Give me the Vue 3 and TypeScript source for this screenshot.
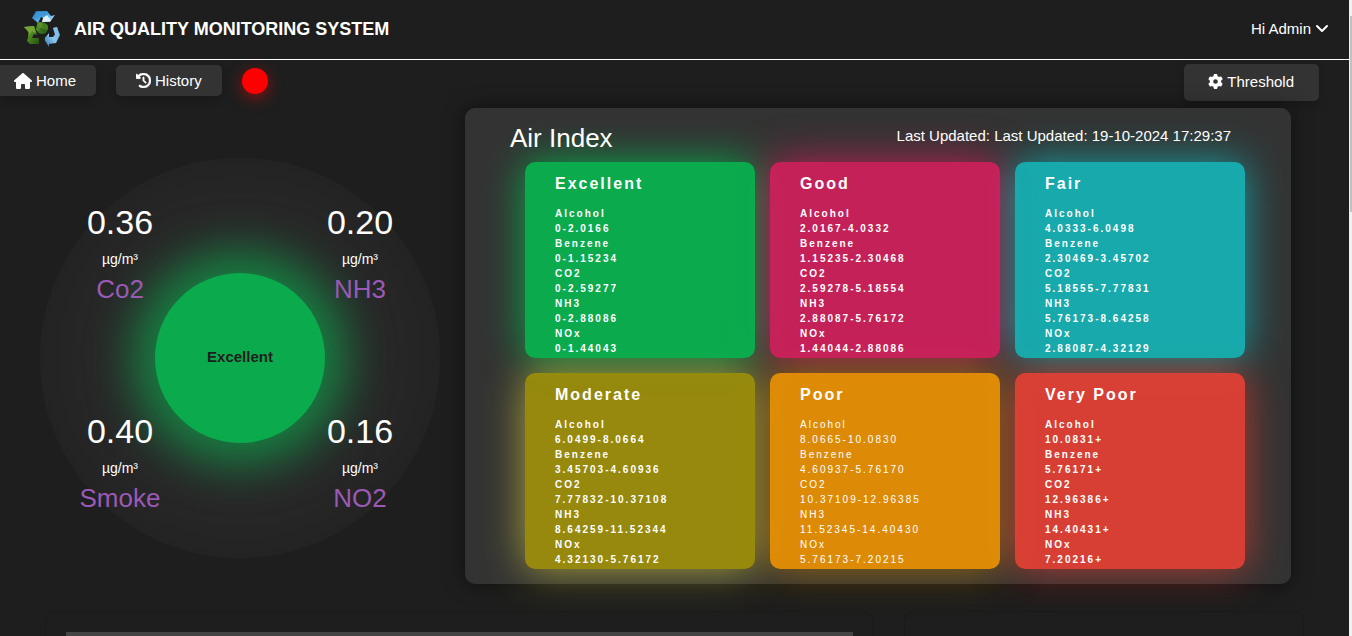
<script setup lang="ts">
interface Reading { id: string; value: string; label: string }
interface Level { name: string; tone: string; ranges: string[] }

const readings: Reading[] = [
  { id: 'co2', value: '0.36', label: 'Co2' },
  { id: 'nh3', value: '0.20', label: 'NH3' },
  { id: 'smoke', value: '0.40', label: 'Smoke' },
  { id: 'no2', value: '0.16', label: 'NO2' },
]

const gases = ['Alcohol', 'Benzene', 'CO2', 'NH3', 'NOx']

const levels: Level[] = [
  { name: 'Excellent', tone: 'excellent', ranges: ['0-2.0166', '0-1.15234', '0-2.59277', '0-2.88086', '0-1.44043'] },
  { name: 'Good', tone: 'good', ranges: ['2.0167-4.0332', '1.15235-2.30468', '2.59278-5.18554', '2.88087-5.76172', '1.44044-2.88086'] },
  { name: 'Fair', tone: 'fair', ranges: ['4.0333-6.0498', '2.30469-3.45702', '5.18555-7.77831', '5.76173-8.64258', '2.88087-4.32129'] },
  { name: 'Moderate', tone: 'moderate', ranges: ['6.0499-8.0664', '3.45703-4.60936', '7.77832-10.37108', '8.64259-11.52344', '4.32130-5.76172'] },
  { name: 'Poor', tone: 'poor', ranges: ['8.0665-10.0830', '4.60937-5.76170', '10.37109-12.96385', '11.52345-14.40430', '5.76173-7.20215'] },
  { name: 'Very Poor', tone: 'very-poor', ranges: ['10.0831+', '5.76171+', '12.96386+', '14.40431+', '7.20216+'] },
]
</script>

<template>
  <div class="page">
    <div class="content">
      <header class="topbar">
        <div class="brand">
          <svg class="logo" viewBox="0 0 38 38" aria-hidden="true">
            <defs>
              <linearGradient id="blueTop" x1="0" y1="0" x2="1" y2="1">
                <stop offset="0" stop-color="#1b6fb5" /><stop offset="0.5" stop-color="#4fa9e4" /><stop offset="1" stop-color="#d8effb" />
              </linearGradient>
              <linearGradient id="blueSide" x1="1" y1="0" x2="0" y2="1">
                <stop offset="0" stop-color="#4d9ddb" /><stop offset="0.5" stop-color="#8cc6ec" /><stop offset="1" stop-color="#266da8" />
              </linearGradient>
              <linearGradient id="leaf" x1="0" y1="0" x2="1" y2="1">
                <stop offset="0" stop-color="#79a938" /><stop offset="0.5" stop-color="#4d8620" /><stop offset="1" stop-color="#245010" />
              </linearGradient>
            </defs>
            <path d="M9 8 13 1H24L28 6 32 5 27 12H19L22 9 18 7 15 13Z" fill="url(#blueTop)" />
            <path d="M14 2H23L25 5 20 6 16 5 12 7Z" fill="#3d97da" />
            <path d="m20 8 4-3 4 6-9 1Z" fill="#e2f1f8" />
            <path d="m30 18 4-1 3 8-4 8-7 1v3l-5-8 5-6v4h4l3-4Z" fill="url(#blueSide)" />
            <path d="m30 18 4-1 2 8-3 3Z" fill="#85bfe8" />
            <path d="m1 17 10-1 3 9-3-1-2 4h7v6H7L4 31 6 24 4 20Z" fill="url(#leaf)" />
            <path d="m1 17 10-1 2 7-4-2-4 6 1-5Z" fill="#75a635" />
            <path d="m18 29 1-9h2l1 10Z" fill="#17280d" />
            <circle cx="19" cy="18" r="6" fill="#36701c" />
            <circle cx="17" cy="15" r="3" fill="#579128" />
            <circle cx="22" cy="17" r="3" fill="#437f20" />
            <circle cx="15" cy="19" r="2" fill="#4d8924" />
            <circle cx="21" cy="21" r="2" fill="#2f6518" />
          </svg>
          <h1>AIR QUALITY MONITORING SYSTEM</h1>
        </div>
        <button class="account" type="button">
          Hi Admin
          <svg class="chevron" viewBox="0 0 14 16" aria-hidden="true"><path d="m2 5 5 5 5-5" /></svg>
        </button>
      </header>

      <nav class="toolbar">
        <div class="links">
          <a class="pill home" href="#home">
            <svg class="icon wide" viewBox="0 0 576 512" aria-hidden="true"><path d="M575.8 255.5c0 18-15 32.1-32 32.1h-32l.7 160.2c0 2.700-.2 5.400-.5 8.100V472c0 22.100-17.900 40-40 40h-80c-22.100 0-40-17.900-40-40v-88c0-17.700-14.300-32-32-32h-64c-17.700 0-32 14.300-32 32v88c0 22.100-17.900 40-40 40h-80c-22.100 0-40-17.900-40-40V287.600H32c-18 0-32-14-32-32.100 0-9 3-17 10-24L266.400 8c7-7 15-8 22-8s15 2 21 7l255.400 224.500c8 7 12 15 11 24Z" /></svg>
            Home
          </a>
          <a class="pill" href="#history">
            <svg class="icon" viewBox="0 0 512 512" aria-hidden="true"><path d="M75 75 41 41C26 26 0 36.700 0 58.100V168c0 13.300 10.700 24 24 24h110.100c21.400 0 32.100-25.900 17-41l-30.800-30.800C155 85.500 203 64 256 64c106 0 192 86 192 192s-86 192-192 192c-40.800 0-78.600-12.700-109.700-34.400-14.500-10.100-34.400-6.600-44.600 7.900s-6.600 34.400 7.900 44.600C151.200 495 201.700 512 256 512c141.400 0 256-114.600 256-256S397.400 0 256 0C185.300 0 121.300 28.700 75 75Zm181 53c-13.300 0-24 10.700-24 24v104c0 6.400 2.500 12.500 7 17l72 72c9.400 9.400 24.600 9.400 33.900 0s9.400-24.600 0-33.900l-65-65V152c0-13.300-10.700-24-24-24Z" stroke="#fff" stroke-width="16" /></svg>
            History
          </a>
          <span class="status" role="status" aria-label="Offline"></span>
        </div>
        <button class="pill threshold" type="button">
          <svg class="icon" viewBox="0 0 512 512" aria-hidden="true"><path d="M495.900 166.600c3.200 8.700.5 18.400-6.400 24.600l-43.300 39.400c1.100 8.300 1.700 16.800 1.700 25.400s-.6 17.100-1.700 25.400l43.300 39.400c6.900 6.200 9.600 15.900 6.400 24.600-4.400 11.900-9.700 23.300-15.800 34.300l-4.700 8.100c-6.600 11-14 21.400-22.100 31.200-5.900 7.200-15.700 9.600-24.500 6.800l-55.700-17.700c-13.400 10.300-28.200 18.900-44 25.400l-12.500 57.100c-2 9.100-9 16.300-18.200 17.800-13.800 2.300-28 3.500-42.500 3.500s-28.700-1.200-42.500-3.500c-9.200-1.500-16.200-8.700-18.200-17.800l-12.500-57.100c-15.800-6.500-30.600-15.100-44-25.400L83.100 425.900c-8.800 2.800-18.600.3-24.500-6.800-8.100-9.800-15.500-20.200-22.100-31.200l-4.700-8.100c-6.100-11-11.400-22.400-15.800-34.300-3.200-8.700-.5-18.400 6.400-24.600l43.300-39.400C64.600 273.100 64 264.600 64 256s.6-17.100 1.700-25.400l-43.300-39.400c-6.900-6.200-9.600-15.900-6.400-24.600 4.400-11.900 9.700-23.300 15.800-34.300l4.700-8.100c6.600-11 14-21.400 22.100-31.200 5.900-7.200 15.700-9.600 24.500-6.800l55.700 17.700c13.400-10.300 28.200-18.900 44-25.400l12.500-57.100c2-9.100 9-16.300 18.200-17.800C227.300 1.200 241.500 0 256 0s28.700 1.200 42.500 3.500c9.200 1.500 16.200 8.700 18.200 17.800l12.500 57.100c15.800 6.500 30.600 15.100 44 25.400l55.700-17.700c8.800-2.800 18.600-.3 24.500 6.800 8.100 9.800 15.500 20.200 22.100 31.200l4.700 8.100c6.100 11 11.400 22.400 15.800 34.300ZM256 336a80 80 0 1 0 0-160 80 80 0 0 0 0 160Z" /></svg>
          Threshold
        </button>
      </nav>

      <main class="dashboard">
        <section class="gauge" aria-label="Current readings">
          <div class="level">Excellent</div>
          <div v-for="r in readings" :key="r.id" class="reading">
            <span class="value">{{ r.value }}</span>
            <span class="unit">µg/m³</span>
            <span class="gas">{{ r.label }}</span>
          </div>
        </section>

        <section class="index">
          <div class="index-head">
            <h2>Air Index</h2>
            <p>Last Updated: Last Updated: 19-10-2024 17:29:37</p>
          </div>
          <div class="cards">
            <article v-for="l in levels" :key="l.name" class="card" :class="l.tone">
              <h3>{{ l.name }}</h3>
              <dl>
                <template v-for="(g, i) in gases" :key="g">
                  <dt>{{ g }}</dt>
                  <dd>{{ l.ranges[i] }}</dd>
                </template>
              </dl>
            </article>
          </div>
        </section>
      </main>

      <div class="charts">
        <section class="chart"><div class="plot"></div></section>
        <section class="chart"></section>
      </div>
    </div>
    <div class="scroll-track" aria-hidden="true"><div class="scroll-thumb"></div></div>
  </div>
</template>

<style>
body {
  margin: 0;
  background: #1e1e1e;
}
</style>

<style scoped>
* {
  box-sizing: border-box;
}

.page {
  display: flex;
  height: 100vh;
  overflow: hidden;
  background: #1e1e1e;
  color: #fff;
  font-family: "Liberation Sans", Arial, sans-serif;
  font-size: 15px;
}

.content {
  flex: 1;
  min-width: 0;
}

h1, h2, h3, p, dl, dd {
  margin: 0;
}

.topbar {
  display: flex;
  align-items: center;
  justify-content: space-between;
  height: 60px;
  padding: 0 20px 2px 23px;
  border-bottom: 1px solid #fff;
}

.brand {
  display: flex;
  align-items: center;
  gap: 13px;
}

.logo {
  width: 38px;
  height: 38px;
}

h1 {
  font-size: 18px;
  line-height: 24px;
}

.account {
  display: flex;
  align-items: center;
  gap: 4px;
  padding: 0;
  border: 0;
  background: none;
  color: inherit;
  font: inherit;
}

.chevron {
  width: 14px;
  height: 16px;
  fill: none;
  stroke: #fff;
  stroke-width: 2;
  stroke-linecap: round;
  stroke-linejoin: round;
}

.toolbar {
  display: flex;
  align-items: flex-start;
  justify-content: space-between;
  height: 48px;
  padding: 4px 30px 0 0;
}

.links {
  display: flex;
  align-items: center;
  gap: 20px;
  padding-top: 1px;
}

.pill {
  display: flex;
  align-items: center;
  gap: 4px;
  height: 31px;
  padding: 0 20px;
  border: 0;
  border-radius: 5px;
  background: #333;
  box-shadow: 0 4px 8px rgba(0, 0, 0, 0.2);
  color: #fff;
  font: inherit;
  text-decoration: none;
}

.pill.home {
  padding-left: 14px;
  border-radius: 0 5px 5px 0;
}

.pill.threshold {
  height: 37px;
  padding: 0 25px 2px 24px;
}

.icon {
  width: 15px;
  height: 15px;
  fill: #fff;
}

.icon.wide {
  width: 18px;
  height: 16px;
}

.status {
  width: 26px;
  height: 26px;
  border-radius: 50%;
  background: #f00;
  box-shadow: 0 4px 15px rgba(255, 0, 0, 0.5);
}

.dashboard {
  display: flex;
  align-items: flex-start;
  justify-content: space-between;
  padding: 0 58px 0 40px;
}

.gauge {
  display: grid;
  grid-template-columns: 160px 160px;
  grid-template-rows: 209px 1fr;
  column-gap: 80px;
  width: 400px;
  height: 400px;
  margin-top: 50px;
  padding-top: 39px;
  border-radius: 50%;
  background: radial-gradient(circle closest-side, #333, #232323);
}

.level {
  grid-area: 1 / 1 / 3 / 3;
  place-self: center;
  width: 170px;
  height: 170px;
  margin-top: -39px;
  border-radius: 50%;
  background: #0bab4d;
  box-shadow: 0 0 45px 22px rgba(11, 171, 77, 0.65);
  color: #1e1e1e;
  font-size: 15px;
  font-weight: bold;
  line-height: 168px;
  text-align: center;
}

.reading {
  display: flex;
  flex-direction: column;
  align-items: center;
  z-index: 1;
}

.reading:nth-child(2),
.reading:nth-child(4) {
  grid-column: 1;
}

.reading:nth-child(3),
.reading:nth-child(5) {
  grid-column: 2;
}

.reading:nth-child(2),
.reading:nth-child(3) {
  grid-row: 1;
}

.reading:nth-child(4),
.reading:nth-child(5) {
  grid-row: 2;
}

.value {
  font-size: 34px;
  line-height: 50px;
}

.unit {
  font-size: 14px;
  line-height: 24px;
}

.gas {
  color: #9b59b6;
  font-size: 26px;
  line-height: 36px;
}

.index {
  padding: 15px 46px 15px 45px;
  border-radius: 10px;
  background: #333;
  box-shadow: 0 0 20px rgba(0, 0, 0, 0.5);
  isolation: isolate;
}

.index-head {
  display: flex;
  justify-content: space-between;
  height: 39px;
  padding-right: 14px;
}

h2 {
  font-size: 26px;
  font-weight: normal;
  line-height: 30px;
}

.index-head p {
  font-size: 15px;
  line-height: 26px;
}

.cards {
  display: grid;
  grid-template-columns: repeat(3, 230px);
  gap: 15px;
  padding-left: 15px;
}

.card {
  position: relative;
  height: 196px;
  padding: 12px 30px 0;
  border-radius: 10px;
  background: var(--fill);
  letter-spacing: 2px;
}

/* The glow sits below every card so that it only tints its neighbours. */
.card::before {
  position: absolute;
  inset: 0;
  z-index: -1;
  border-radius: 10px;
  box-shadow: 0 0 40px var(--glow);
  content: "";
}

h3 {
  font-size: 16px;
  line-height: 20px;
}

dl {
  margin-top: 12px;
  font-size: 10px;
  font-weight: bold;
  line-height: 15px;
}

.excellent { --fill: rgba(6, 183, 80, 0.9); --glow: rgba(6, 181, 79, 0.9); }
.good { --fill: rgba(213, 31, 93, 0.9); --glow: rgba(211, 32, 92, 0.85); }
.fair { --fill: rgba(20, 182, 184, 0.9); --glow: rgba(20, 179, 182, 0.85); }
.moderate { --fill: rgba(161, 146, 9, 0.9); --glow: rgba(190, 182, 60, 0.85); }
.poor { --fill: rgba(236, 147, 3, 0.92); --glow: rgba(190, 125, 5, 0.75); }
.very-poor { --fill: rgba(229, 65, 53, 0.93); --glow: rgba(224, 64, 52, 0.75); }

.poor dl {
  font-weight: normal;
}

.charts {
  display: grid;
  grid-template-columns: 829px 400px;
  gap: 30px;
  padding: 27px 0 0 45px;
}

.chart {
  height: 340px;
  padding: 20px;
  border: 1px solid #1a1a1a;
  border-radius: 10px;
}

.plot {
  height: 300px;
  background: #444;
}

.scroll-track {
  width: 3px;
  background: #f1f1f1;
}

.scroll-thumb {
  height: 196px;
  margin: 16px 0 0 1px;
  background: #c1c1c1;
}
</style>
